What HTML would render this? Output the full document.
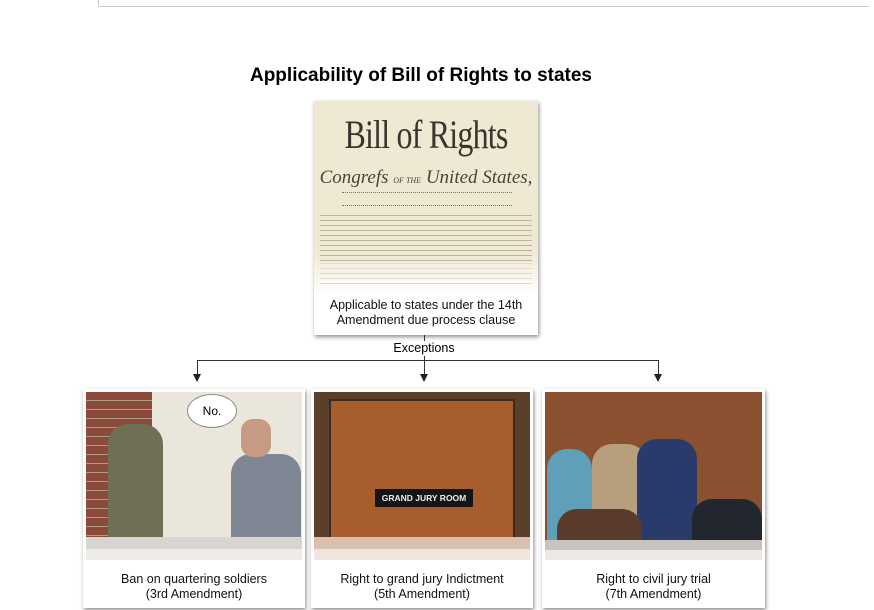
<!DOCTYPE html>
<html><head><style>
body{margin:0;width:874px;height:610px;background:#fff;position:relative;overflow:hidden;font-family:"Liberation Sans",sans-serif}
.a{position:absolute}
.card{position:absolute;background:#fff;box-shadow:1px 2px 4px rgba(0,0,0,.45);overflow:hidden}
.cap{position:absolute;left:0;right:0;text-align:center;font-size:12.5px;line-height:15px;color:#111}
.img{position:absolute;left:3px;top:3px;right:3px;height:168px;overflow:hidden}
</style></head><body>
<div class="a" style="left:98px;top:0;width:770px;height:6px;border-left:1px solid #ccc;border-bottom:1px solid #ccc"></div>
<div class="a" style="left:0;width:842px;top:65px;text-align:center;font-weight:bold;font-size:19px">Applicability of Bill of Rights to states</div>

<div class="card" style="left:314px;top:101px;width:224px;height:234px">
 <div class="a" style="left:0;top:0;width:224px;height:195px;background:linear-gradient(#efe8d3 150px,#fff 195px);overflow:hidden">
  <div class="a" style="left:0;top:10px;width:224px;text-align:center;font-family:'Liberation Serif',serif;font-size:40px;color:#3a352c;letter-spacing:-1px;transform:scaleX(.8)">Bill of Rights</div>
  <div class="a" style="left:0;top:66px;width:224px;text-align:center;white-space:nowrap;font-family:'Liberation Serif',serif;font-style:italic;font-size:19px;color:#4a4438">Congrefs <span style="font-size:8px">OF THE</span> United States,</div>
  <div class="a" style="left:28px;top:91px;width:170px;height:12px;border-top:1px dotted #776;border-bottom:1px dotted #776"></div>
  <div class="a" style="left:6px;top:112px;width:212px;height:48px;background:repeating-linear-gradient(#efe8d3 0 2px,#bcb49f 2px 3px,#efe8d3 3px 5px)"></div>
  <div class="a" style="left:6px;top:160px;width:212px;height:25px;background:repeating-linear-gradient(transparent 0 2px,#e0dccd 2px 3px,transparent 3px 5px)"></div>
 </div>
 <div class="cap" style="top:197px">Applicable to states under the 14th<br>Amendment due process clause</div>
</div>

<div class="a" style="left:424px;top:335px;width:1px;height:6px;background:#333"></div>
<div class="a" style="left:0;width:848px;top:341px;text-align:center;font-size:12.5px">Exceptions</div>
<div class="a" style="left:424px;top:356px;width:1px;height:4px;background:#333"></div>
<div class="a" style="left:197px;top:360px;width:462px;height:1px;background:#333"></div>
<div class="a" style="left:197px;top:360px;width:1px;height:16px;background:#333"></div>
<div class="a" style="left:424px;top:360px;width:1px;height:16px;background:#333"></div>
<div class="a" style="left:658px;top:360px;width:1px;height:16px;background:#333"></div>
<div class="a" style="left:193px;top:374px;border:4px solid transparent;border-top:8px solid #222"></div>
<div class="a" style="left:420px;top:374px;border:4px solid transparent;border-top:8px solid #222"></div>
<div class="a" style="left:654px;top:374px;border:4px solid transparent;border-top:8px solid #222"></div>

<div class="card" style="left:83px;top:389px;width:222px;height:219px">
 <div class="img">
  <div class="a" style="left:0;top:0;width:66px;height:168px;background:repeating-linear-gradient(#8a4b3a 0 8px,#b29a88 8px 9px)"></div>
  <div class="a" style="left:66px;top:0;width:150px;height:168px;background:#ebe6db"></div>
  <div class="a" style="left:22px;top:32px;width:55px;height:136px;background:#6f6f56;border-radius:20px 20px 0 0"></div>
  <div class="a" style="left:145px;top:62px;width:70px;height:106px;background:#7f8794;border-radius:20px 20px 0 0"></div>
  <div class="a" style="left:155px;top:27px;width:30px;height:38px;background:#c79b83;border-radius:12px"></div>
  <div class="a" style="left:0;top:145px;width:216px;height:12px;background:#d8d4cf"></div>
  <div class="a" style="left:0;top:157px;width:216px;height:11px;background:#eeece9"></div>
 </div>
 <div class="a" style="left:105px;top:6px;width:48px;height:32px;background:#fff;border-radius:50%;box-shadow:0 0 0 1px #888;font-size:12px;text-align:center;line-height:32px">No.</div>
 <div class="cap" style="top:183px">Ban on quartering soldiers<br>(3rd Amendment)</div>
</div>

<div class="card" style="left:311px;top:389px;width:222px;height:219px">
 <div class="img">
  <div class="a" style="left:0;top:0;width:216px;height:168px;background:#5a3f2a"></div>
  <div class="a" style="left:15px;top:7px;width:182px;height:161px;background:#a75e2c;border:2px solid #3b2c1f;border-bottom:0"></div>
  <div class="a" style="left:0;top:145px;width:216px;height:12px;background:#d9bfae"></div>
  <div class="a" style="left:0;top:157px;width:216px;height:11px;background:#efe5de"></div>
 </div>
 <div class="a" style="left:64px;top:100px;width:98px;height:18px;background:#151515;color:#eee;font-size:8.5px;font-weight:bold;text-align:center;line-height:18px">GRAND JURY ROOM</div>
 <div class="cap" style="top:183px">Right to grand jury Indictment<br>(5th Amendment)</div>
</div>

<div class="card" style="left:542px;top:389px;width:223px;height:219px">
 <div class="img">
  <div class="a" style="left:0;top:0;width:218px;height:168px;background:#8a5030"></div>
  <div class="a" style="left:2px;top:57px;width:45px;height:111px;background:#5fa0b8;border-radius:20px 20px 0 0"></div>
  <div class="a" style="left:47px;top:52px;width:55px;height:116px;background:#b79e7d;border-radius:20px 20px 0 0"></div>
  <div class="a" style="left:92px;top:47px;width:60px;height:121px;background:#2a3a6a;border-radius:20px 20px 0 0"></div>
  <div class="a" style="left:147px;top:107px;width:70px;height:61px;background:#22262e;border-radius:20px 20px 0 0"></div>
  <div class="a" style="left:12px;top:117px;width:85px;height:51px;background:#5a3a2a;border-radius:20px 20px 0 0"></div>
  <div class="a" style="left:0;top:148px;width:218px;height:10px;background:#c9c3c0"></div>
  <div class="a" style="left:0;top:158px;width:218px;height:10px;background:#ebe8e6"></div>
 </div>
 <div class="cap" style="top:183px">Right to civil jury trial<br>(7th Amendment)</div>
</div>
</body></html>
